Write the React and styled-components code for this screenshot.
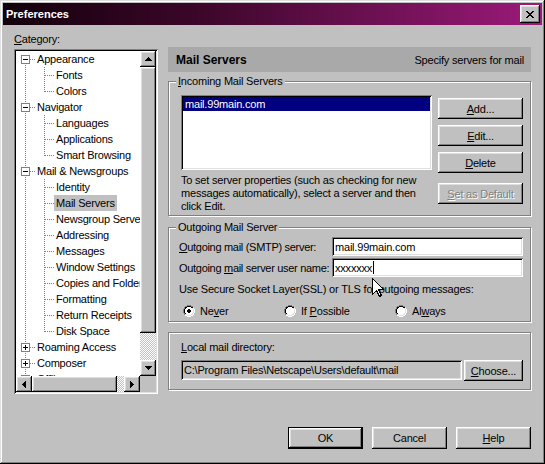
import React from 'react';
import styled, { createGlobalStyle } from 'styled-components';

const FONT = `'Liberation Sans', Arial, Helvetica, sans-serif`;

const GlobalStyle = createGlobalStyle`
  html, body { margin: 0; padding: 0; background: #c0c0c0; }
  body { font-family: ${FONT}; font-size: 11px; }
  *, *::before, *::after { box-sizing: border-box; }
`;

const raised = `box-shadow: inset -1px -1px #000, inset 1px 1px #fff, inset -2px -2px #808080, inset 2px 2px #dfdfdf;`;
const sunken = `box-shadow: inset 1px 1px #808080, inset -1px -1px #fff, inset 2px 2px #000, inset -2px -2px #dfdfdf;`;

const Window = styled.div`
  position: relative;
  width: 545px;
  height: 464px;
  padding: 3px;
  background: #c0c0c0;
  box-shadow: inset -1px -1px #000, inset 1px 1px #dfdfdf, inset -2px -2px #808080, inset 2px 2px #fff;
  display: flex;
  flex-direction: column;
  font-family: ${FONT};
  font-size: 11px;
  letter-spacing: -0.2px;
  color: #000;
  overflow: hidden;
`;

const TitleBar = styled.div`
  height: 22px;
  flex: none;
  display: flex;
  align-items: center;
  padding: 0 2px 0 3px;
  background: linear-gradient(to right, #12000b 0%, #3a0628 35%, #9c1a7a 100%);
  color: #fff;
  font-weight: bold;
  font-size: 11px;
  letter-spacing: 0;
`;

const TitleText = styled.span`
  flex: 1;
`;

const CloseBtn = styled.button`
  width: 20px;
  height: 18px;
  padding: 0;
  border: none;
  background: #c0c0c0;
  ${raised}
  display: flex;
  align-items: center;
  justify-content: center;
`;

const Body = styled.div`
  display: grid;
  grid-template-columns: 144px 363px;
  column-gap: 10px;
  padding: 6px 0 0 11px;
  align-items: start;
`;

const LeftCol = styled.div`
  display: flex;
  flex-direction: column;
`;

const FieldLabel = styled.div`
  line-height: 16px;
  height: 16px;
  white-space: nowrap;
`;

const TreeBox = styled.div`
  margin-top: 2px;
  width: 144px;
  height: 345px;
  padding: 2px;
  background: #fff;
  ${sunken}
  display: grid;
  grid-template-columns: 1fr 16px;
  grid-template-rows: 1fr 16px;
  overflow: hidden;
`;

const TreeList = styled.ul`
  list-style: none;
  margin: 0;
  padding: 0;
  overflow: hidden;
  min-width: 0;
  min-height: 0;
`;

const TreeRow = styled.li`
  height: 16px;
  display: flex;
  align-items: center;
  white-space: nowrap;
  svg { flex: none; display: block; }
`;

const TreeText = styled.span`
  padding: 0 2px;
  height: 16px;
  line-height: 16px;
  background: ${(p) => (p.$selected ? '#c0c0c0' : 'transparent')};
`;

const VScroll = styled.div`
  display: flex;
  flex-direction: column;
  min-height: 0;
`;

const HScroll = styled.div`
  display: flex;
  min-width: 0;
`;

const ScrollBtn = styled.div`
  width: 16px;
  height: 16px;
  flex: none;
  background: #c0c0c0;
  ${raised}
  display: flex;
  align-items: center;
  justify-content: center;
`;

const Thumb = styled.div`
  flex: none;
  background: #c0c0c0;
  ${raised}
`;

const Track = styled.div`
  flex: 1;
  background: repeating-conic-gradient(#ffffff 0 25%, #c0c0c0 0 50%) 0 0 / 2px 2px;
`;

const Corner = styled.div`
  background: #c0c0c0;
`;

const RightCol = styled.div`
  margin-top: 16px;
  display: flex;
  flex-direction: column;
`;

const Header = styled.div`
  height: 25px;
  display: flex;
  align-items: center;
  justify-content: space-between;
  padding: 0 7px 0 8px;
  background: #a9a9a9;
`;

const HeaderTitle = styled.span`
  font-weight: bold;
  font-size: 12px;
  letter-spacing: 0;
`;

const Group = styled.div`
  position: relative;
  height: ${(p) => p.$h}px;
  margin-top: ${(p) => p.$mt}px;
  padding: ${(p) => p.$pad};
  border: 1px solid #808080;
  box-shadow: inset 1px 1px #fff, 1px 1px #fff;
`;

const GroupLabel = styled.span`
  position: absolute;
  top: -7px;
  left: 7px;
  padding: 0 2px;
  line-height: 13px;
  background: #c0c0c0;
  white-space: nowrap;
`;

const IncomingGrid = styled.div`
  display: grid;
  grid-template-columns: 251px 85px;
  column-gap: 6px;
`;

const ListBox = styled.div`
  height: 75px;
  padding: 2px;
  background: #fff;
  ${sunken}
`;

const ListItem = styled.div`
  height: 14px;
  line-height: 14px;
  padding-left: 2px;
  background: ${(p) => (p.$selected ? '#000080' : 'transparent')};
  color: ${(p) => (p.$selected ? '#fff' : '#000')};
`;

const Note = styled.p`
  margin: 4px 0 0;
  line-height: 13px;
`;

const ButtonStack = styled.div`
  display: flex;
  flex-direction: column;
  gap: 6px;
  padding-top: 3px;
`;

const Button = styled.button`
  width: ${(p) => p.$w}px;
  height: ${(p) => p.$h || 21}px;
  margin-top: ${(p) => p.$mt || 0}px;
  flex: none;
  padding: 0;
  border: ${(p) => (p.$default ? '1px solid #000' : 'none')};
  background: #c0c0c0;
  ${raised}
  font-family: ${FONT};
  font-size: 11px;
  letter-spacing: -0.2px;
  color: ${(p) => (p.disabled ? '#808080' : '#000')};
  text-shadow: ${(p) => (p.disabled ? '1px 1px 0 #fff' : 'none')};
`;

const FormGrid = styled.div`
  display: grid;
  grid-template-columns: 1fr 191px;
  grid-auto-rows: 19px;
  row-gap: 2px;
  align-items: center;
`;

const FormLabel = styled.span`
  white-space: nowrap;
  letter-spacing: -0.3px;
`;

const TextField = styled.div`
  height: ${(p) => p.$h || 19}px;
  width: ${(p) => (p.$w ? `${p.$w}px` : 'auto')};
  padding: 0 3px;
  display: flex;
  align-items: center;
  background: ${(p) => (p.$readonly ? '#c0c0c0' : '#fff')};
  ${sunken}
  white-space: nowrap;
  overflow: hidden;
`;

const Caret = styled.span`
  display: inline-block;
  width: 1px;
  height: 13px;
  margin-left: 1px;
  background: #000;
`;

const Line = styled.div`
  margin-top: ${(p) => p.$mt || 0}px;
  line-height: 16px;
  height: 16px;
  white-space: nowrap;
`;

const RadioRow = styled.div`
  margin-top: 6px;
  padding-left: 4px;
  height: 16px;
  display: grid;
  grid-template-columns: 101px 111px auto;
  align-items: center;
`;

const RadioOpt = styled.label`
  display: flex;
  align-items: center;
  gap: 5px;
  svg { display: block; }
`;

const DirRow = styled.div`
  margin-top: 5px;
  display: flex;
  gap: 2px;
  align-items: flex-start;
`;

const Footer = styled.div`
  margin-top: 37px;
  display: flex;
  justify-content: flex-end;
  gap: 9px;
`;

const Pointer = styled.svg`
  position: absolute;
  left: 372px;
  top: 278px;
`;

/* pixel-art drawing helper */
function Pixels({ rows, palette }) {
  const h = rows.length;
  const w = rows[0].length;
  const rects = [];
  rows.forEach((r, y) => {
    [...r].forEach((c, x) => {
      if (palette[c]) rects.push(<rect key={`${x}-${y}`} x={x} y={y} width="1" height="1" fill={palette[c]} />);
    });
  });
  return (
    <svg width={w} height={h} viewBox={`0 0 ${w} ${h}`} shapeRendering="crispEdges">
      {rects}
    </svg>
  );
}

const BLACK = { X: '#000' };
const closeX = ['XX....XX', '.XX..XX.', '..XXXX..', '...XX...', '..XXXX..', '.XX..XX.', 'XX....XX'];
const arrowUp = ['...X...', '..XXX..', '.XXXXX.', 'XXXXXXX'];
const arrowDown = ['XXXXXXX', '.XXXXX.', '..XXX..', '...X...'];
const arrowLeft = ['...X', '..XX', '.XXX', 'XXXX', '.XXX', '..XX', '...X'];
const arrowRight = ['X...', 'XX..', 'XXX.', 'XXXX', 'XXX.', 'XX..', 'X...'];

const radioBase = [
  '....GGGG....',
  '..GGKKKKGG..',
  '.GKKWWWWKKL.',
  '.GKWWWWWWLW.',
  'GKWWWWWWWWLW',
  'GKWWWWWWWWLW',
  'GKWWWWWWWWLW',
  'GKWWWWWWWWLW',
  '.GKWWWWWWLW.',
  '.GLLWWWWLLW.',
  '..WWLLLLWW..',
  '....WWWW....',
];
const radioOn = radioBase.map((r, y) => {
  const dot = { 4: '.XX.', 5: 'XXXX', 6: 'XXXX', 7: '.XX.' }[y];
  if (!dot) return r;
  const chars = [...r];
  [...dot].forEach((c, i) => { if (c === 'X') chars[4 + i] = 'X'; });
  return chars.join('');
});
const radioPalette = { G: '#808080', K: '#000', W: '#fff', L: '#dfdfdf', X: '#000' };

function Radio({ checked, children }) {
  return (
    <RadioOpt>
      <Pixels rows={checked ? radioOn : radioBase} palette={radioPalette} />
      <span>{children}</span>
    </RadioOpt>
  );
}

const DOT = '#808080';

function RootGutter({ first, exp }) {
  return (
    <svg width="19" height="16">
      <line x1="9.5" y1={first ? 8 : 0} x2="9.5" y2="16" stroke={DOT} strokeDasharray="1 1" />
      <line x1="14" y1="8.5" x2="19" y2="8.5" stroke={DOT} strokeDasharray="1 1" />
      <rect x="5.5" y="4.5" width="8" height="8" fill="#fff" stroke={DOT} shapeRendering="crispEdges" />
      <line x1="7" y1="8.5" x2="12" y2="8.5" stroke="#000" shapeRendering="crispEdges" />
      {exp === '+' && <line x1="9.5" y1="6" x2="9.5" y2="11" stroke="#000" shapeRendering="crispEdges" />}
    </svg>
  );
}

function ChildGutter({ last }) {
  return (
    <svg width="38" height="16">
      <line x1="9.5" y1="0" x2="9.5" y2="16" stroke={DOT} strokeDasharray="1 1" />
      <line x1="28.5" y1="0" x2="28.5" y2={last ? 9 : 16} stroke={DOT} strokeDasharray="1 1" />
      <line x1="29" y1="8.5" x2="38" y2="8.5" stroke={DOT} strokeDasharray="1 1" />
    </svg>
  );
}

const tree = [
  { label: 'Appearance', exp: '-' },
  { label: 'Fonts', child: true },
  { label: 'Colors', child: true, last: true },
  { label: 'Navigator', exp: '-' },
  { label: 'Languages', child: true },
  { label: 'Applications', child: true },
  { label: 'Smart Browsing', child: true, last: true },
  { label: 'Mail & Newsgroups', exp: '-' },
  { label: 'Identity', child: true },
  { label: 'Mail Servers', child: true, selected: true },
  { label: 'Newsgroup Servers', child: true },
  { label: 'Addressing', child: true },
  { label: 'Messages', child: true },
  { label: 'Window Settings', child: true },
  { label: 'Copies and Folders', child: true },
  { label: 'Formatting', child: true },
  { label: 'Return Receipts', child: true },
  { label: 'Disk Space', child: true, last: true },
  { label: 'Roaming Access', exp: '+' },
  { label: 'Composer', exp: '+' },
  { label: 'Offline', exp: '+' },
];

export default function App() {
  return (
    <>
      <GlobalStyle />
      <Window>
        <TitleBar>
          <TitleText>Preferences</TitleText>
          <CloseBtn aria-label="Close">
            <Pixels rows={closeX} palette={BLACK} />
          </CloseBtn>
        </TitleBar>

        <Body>
          <LeftCol>
            <FieldLabel><u>C</u>ategory:</FieldLabel>
            <TreeBox>
              <TreeList>
                {tree.map((n, i) => (
                  <TreeRow key={n.label}>
                    {n.child ? <ChildGutter last={n.last} /> : <RootGutter first={i === 0} exp={n.exp} />}
                    <TreeText $selected={n.selected}>{n.label}</TreeText>
                  </TreeRow>
                ))}
              </TreeList>
              <VScroll>
                <ScrollBtn><Pixels rows={arrowUp} palette={BLACK} /></ScrollBtn>
                <Thumb style={{ height: 266 }} />
                <Track />
                <ScrollBtn><Pixels rows={arrowDown} palette={BLACK} /></ScrollBtn>
              </VScroll>
              <HScroll>
                <ScrollBtn><Pixels rows={arrowLeft} palette={BLACK} /></ScrollBtn>
                <Thumb style={{ width: 85 }} />
                <Track />
                <ScrollBtn><Pixels rows={arrowRight} palette={BLACK} /></ScrollBtn>
              </HScroll>
              <Corner />
            </TreeBox>
          </LeftCol>

          <RightCol>
            <Header>
              <HeaderTitle>Mail Servers</HeaderTitle>
              <span>Specify servers for mail</span>
            </Header>

            <Group $h={135} $mt={9} $pad="13px 7px 0 12px">
              <GroupLabel><u>I</u>ncoming Mail Servers</GroupLabel>
              <IncomingGrid>
                <div>
                  <ListBox>
                    <ListItem $selected>mail.99main.com</ListItem>
                  </ListBox>
                  <Note>
                    To set server properties (such as checking for new<br />
                    messages automatically), select a server and then<br />
                    click Edit.
                  </Note>
                </div>
                <ButtonStack>
                  <Button $w={85}><u>A</u>dd...</Button>
                  <Button $w={85}><u>E</u>dit...</Button>
                  <Button $w={85}><u>D</u>elete</Button>
                  <Button $w={85} $mt={4} disabled><u>S</u>et as Default</Button>
                </ButtonStack>
              </IncomingGrid>
            </Group>

            <Group $h={95} $mt={11} $pad="9px 7px 0 10px">
              <GroupLabel>Outgoing Mail Server</GroupLabel>
              <FormGrid>
                <FormLabel><u>O</u>utgoing mail (SMTP) server:</FormLabel>
                <TextField>mail.99main.com</TextField>
                <FormLabel>Outgoing <u>m</u>ail server user name:</FormLabel>
                <TextField>xxxxxxx<Caret /></TextField>
              </FormGrid>
              <Line $mt={4}>Use Secure Socket Layer(SSL) or TLS for outgoing messages:</Line>
              <RadioRow>
                <Radio checked>Ne<u>v</u>er</Radio>
                <Radio>If <u>P</u>ossible</Radio>
                <Radio>Al<u>w</u>ays</Radio>
              </RadioRow>
            </Group>

            <Group $h={58} $mt={10} $pad="6px 7px 0 12px">
              <Line><u>L</u>ocal mail directory:</Line>
              <DirRow>
                <TextField $w={281} $h={20} $readonly>C:\Program Files\Netscape\Users\default\mail</TextField>
                <Button $w={59}><u>C</u>hoose...</Button>
              </DirRow>
            </Group>

            <Footer>
              <Button $w={75} $h={22} $default>OK</Button>
              <Button $w={75} $h={22}>Cancel</Button>
              <Button $w={75} $h={22}><u>H</u>elp</Button>
            </Footer>
          </RightCol>
        </Body>

        <Pointer width="12" height="20" viewBox="0 0 12 20" shapeRendering="crispEdges">
          <path d="M0.5 0.5 L0.5 16.5 L4.5 12.5 L7.5 18.5 L9.5 17.5 L6.5 11.5 L11.5 11.5 Z" fill="#fff" stroke="#000" />
        </Pointer>
      </Window>
    </>
  );
}
